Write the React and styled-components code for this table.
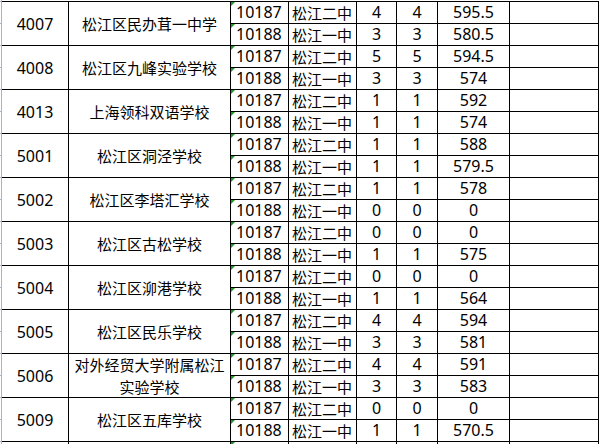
import React from 'react';
import styled, { createGlobalStyle } from 'styled-components';

const GlobalStyle = createGlobalStyle`
  html, body {
    margin: 0;
    padding: 0;
    background: #fff;
    overflow: hidden;
  }
  body {
    width: 601px;
    height: 444px;
  }
`;

const Page = styled.div`
  display: flex;
  align-items: stretch;
  height: 444px;
  overflow: hidden;
`;

// row header edge of the sheet, with its little row ticks
const Gutter = styled.div`
  width: 1px;
  flex: none;
  border-right: 1px solid #9eb6ce;
  background-image: repeating-linear-gradient(
    to bottom,
    #9eb6ce 0 1px,
    transparent 1px 22px
  );
  background-position: 0 1px;
`;

const Sheet = styled.div`
  display: grid;
  grid-template-columns: 66px 161px 57px 67px 39px 40px 71px 88px;
  grid-auto-rows: 21px;
  gap: 1px;
  align-self: flex-start;
  margin-top: 1px;
  background: #000;
  border-top: 1px solid #000;
  border-right: 1px solid #000;
`;

const Cell = styled.div`
  position: relative;
  display: flex;
  align-items: center;
  justify-content: ${(p) => (p.$left ? 'flex-start' : 'center')};
  padding-left: ${(p) => (p.$left ? p.$left : 0)}px;
  background: #fff;
  color: #000;
  font-family: ${(p) =>
    p.$cjk
      ? '"Noto Sans CJK SC", "Noto Sans", sans-serif'
      : '"Noto Sans", "Noto Sans CJK SC", sans-serif'};
  font-size: ${(p) => (p.$cjk ? 15 : 16)}px;
  line-height: 21px;
  white-space: nowrap;
  overflow: hidden;
`;

const GroupCell = styled(Cell)`
  grid-row: span 2;
  text-align: center;
  white-space: normal;
  line-height: 22px;
  padding: 0 2px;
`;

// number stored as text: Excel's green corner mark
const TextCell = styled(Cell)`
  &::before {
    content: '';
    position: absolute;
    top: 0;
    left: 0;
    border-top: 4px solid #1f9a2a;
    border-right: 4px solid transparent;
  }
`;

const rows = [
  ['4007', '松江区民办茸一中学', [4, 4, '595.5'], [3, 3, '580.5']],
  ['4008', '松江区九峰实验学校', [5, 5, '594.5'], [3, 3, '574']],
  ['4013', '上海领科双语学校', [1, 1, '592'], [1, 1, '574']],
  ['5001', '松江区洞泾学校', [1, 1, '588'], [1, 1, '579.5']],
  ['5002', '松江区李塔汇学校', [1, 1, '578'], [0, 0, '0']],
  ['5003', '松江区古松学校', [0, 0, '0'], [1, 1, '575']],
  ['5004', '松江区泖港学校', [0, 0, '0'], [1, 1, '564']],
  ['5005', '松江区民乐学校', [4, 4, '594'], [3, 3, '581']],
  ['5006', '对外经贸大学附属松江实验学校', [4, 4, '591'], [3, 3, '583']],
  ['5009', '松江区五库学校', [0, 0, '0'], [1, 1, '570.5']],
  ['', '', null, null],
];

const SubRow = ({ code, school, data }) => (
  <>
    <TextCell $left={5}>{data ? code : ''}</TextCell>
    <Cell $cjk $left={3}>{data ? school : ''}</Cell>
    <Cell>{data ? data[0] : ''}</Cell>
    <Cell>{data ? data[1] : ''}</Cell>
    <Cell>{data ? data[2] : ''}</Cell>
    <Cell />
  </>
);

export default function App() {
  return (
    <Page>
      <GlobalStyle />
      <Gutter />
      <Sheet>
        {rows.map(([id, name, second, first]) => (
          <React.Fragment key={id || 'tail'}>
            <GroupCell>{id}</GroupCell>
            <GroupCell $cjk>{name}</GroupCell>
            <SubRow code="10187" school="松江二中" data={second} />
            <SubRow code="10188" school="松江一中" data={first} />
          </React.Fragment>
        ))}
      </Sheet>
    </Page>
  );
}
